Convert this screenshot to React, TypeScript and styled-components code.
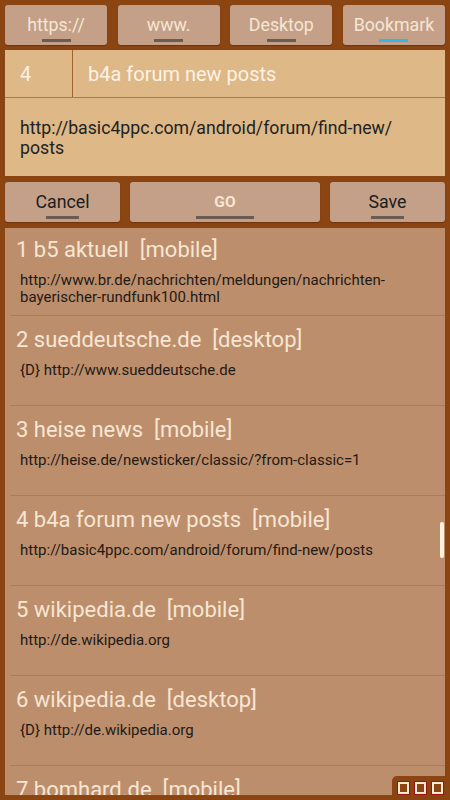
import React from "react";
import styled, { createGlobalStyle } from "styled-components";

const Global = createGlobalStyle`
  html, body {
    margin: 0;
    padding: 0;
    background: #8b4513;
    font-family: Roboto, "Noto Sans", sans-serif;
  }
`;

const Screen = styled.div`
  width: 450px;
  height: 800px;
  box-sizing: border-box;
  padding: 5px;
  display: flex;
  flex-direction: column;
  overflow: hidden;
  position: relative;
`;

const TopBar = styled.div`
  display: grid;
  grid-template-columns: repeat(4, 102px);
  justify-content: space-between;
  height: 40px;
`;

const Btn = styled.div<{ $dark?: boolean; $bold?: boolean }>`
  background: #c4a088;
  border-radius: 3px;
  box-shadow: 0 1px 1px rgba(60, 20, 0, 0.35);
  display: flex;
  flex-direction: column;
  align-items: center;
  justify-content: flex-start;
  color: ${(p) => (p.$dark ? "#1c1c1c" : "#f6e6d4")};
  font-size: ${(p) => (p.$bold ? "15.5px" : "17.8px")};
  font-weight: ${(p) => (p.$bold ? 700 : 400)};
  line-height: 22px;
  padding-top: 9px;
  box-sizing: border-box;
`;

const Bar = styled.span<{ $w: number; $blue?: boolean }>`
  display: block;
  width: ${(p) => p.$w}px;
  height: 3px;
  margin-top: 3px;
  background: ${(p) => (p.$blue ? "#33b5e5" : "#5a5048")};
  opacity: ${(p) => (p.$blue ? 1 : 0.85)};
`;

const Editor = styled.div`
  margin-top: 5px;
  background: #deb887;
  display: flex;
  flex-direction: column;
`;

const NameRow = styled.div`
  display: flex;
  height: 47px;
  border-bottom: 1px solid #b07a45;
  color: #fbf2e6;
  font-size: 20px;
`;

const NumCell = styled.div`
  width: 68px;
  border-right: 1px solid #a0622e;
  display: flex;
  align-items: center;
  padding-left: 15px;
  box-sizing: border-box;
`;

const NameCell = styled.div`
  flex: 1;
  display: flex;
  align-items: center;
  padding-left: 15px;
`;

const UrlBox = styled.div`
  height: 78px;
  padding: 20px 15px 0 15px;
  box-sizing: border-box;
  color: #222;
  font-size: 17.7px;
  line-height: 20px;
`;

const ActionRow = styled.div`
  margin-top: 6px;
  display: grid;
  grid-template-columns: 115px 190px 115px;
  justify-content: space-between;
  height: 40px;
`;

const List = styled.div`
  margin-top: 6px;
  flex: 1;
  background: #bd8e6b;
  position: relative;
  overflow: hidden;
`;

const Item = styled.div`
  height: 90px;
  margin-left: 5px;
  border-bottom: 1px solid #ab7c5a;
  box-sizing: border-box;
  padding: 10px 0 0 6px;
  &:first-child {
    height: 88px;
    padding-top: 8px;
  }
`;

const Title = styled.div`
  color: #f6e6d4;
  font-size: 22px;
  line-height: 28px;
  white-space: pre;
`;

const Link = styled.div`
  margin-top: 8px;
  padding-left: 4px;
  color: #1e1a16;
  font-size: 15px;
  line-height: 17px;
  padding-right: 40px;
`;

const Thumb = styled.div`
  position: absolute;
  right: 1px;
  top: 294px;
  width: 4px;
  height: 36px;
  border-radius: 2px;
  background: #fff3e0;
`;

const Corner = styled.div`
  position: absolute;
  right: 0;
  bottom: 0;
  display: flex;
  gap: 4px;
  padding: 5px 6px 5px 5px;
  background: #8b4513;
  border-top-left-radius: 5px;
`;

const Square = styled.div`
  width: 7px;
  height: 8px;
  border: 2px solid #fbead6;
  outline: 1px solid #a01010;
  margin: 1px;
  background: #8b4513;
`;

const items = [
  { t: "1 b5 aktuell  [mobile]", u: "http://www.br.de/nachrichten/meldungen/nachrichten-bayerischer-rundfunk100.html" },
  { t: "2 sueddeutsche.de  [desktop]", u: "{D} http://www.sueddeutsche.de" },
  { t: "3 heise news  [mobile]", u: "http://heise.de/newsticker/classic/?from-classic=1" },
  { t: "4 b4a forum new posts  [mobile]", u: "http://basic4ppc.com/android/forum/find-new/posts" },
  { t: "5 wikipedia.de  [mobile]", u: "http://de.wikipedia.org" },
  { t: "6 wikipedia.de  [desktop]", u: "{D} http://de.wikipedia.org" },
  { t: "7 bomhard.de  [mobile]", u: "http://www.bomhard.de" },
];

export default function App() {
  return (
    <>
      <Global />
      <Screen>
        <TopBar>
          <Btn>https://<Bar $w={29} /></Btn>
          <Btn>www.<Bar $w={29} /></Btn>
          <Btn>Desktop<Bar $w={29} /></Btn>
          <Btn>Bookmark<Bar $w={29} $blue /></Btn>
        </TopBar>
        <Editor>
          <NameRow>
            <NumCell>4</NumCell>
            <NameCell>b4a forum new posts</NameCell>
          </NameRow>
          <UrlBox>http://basic4ppc.com/android/forum/find-new/<br />posts</UrlBox>
        </Editor>
        <ActionRow>
          <Btn $dark>Cancel<Bar $w={33} /></Btn>
          <Btn $bold>GO<Bar $w={58} /></Btn>
          <Btn $dark>Save<Bar $w={33} /></Btn>
        </ActionRow>
        <List>
          {items.map((it) => (
            <Item key={it.t}>
              <Title>{it.t}</Title>
              <Link>{it.u}</Link>
            </Item>
          ))}
          <Thumb />
        </List>
        <Corner>
          <Square />
          <Square />
          <Square />
        </Corner>
      </Screen>
    </>
  );
}
